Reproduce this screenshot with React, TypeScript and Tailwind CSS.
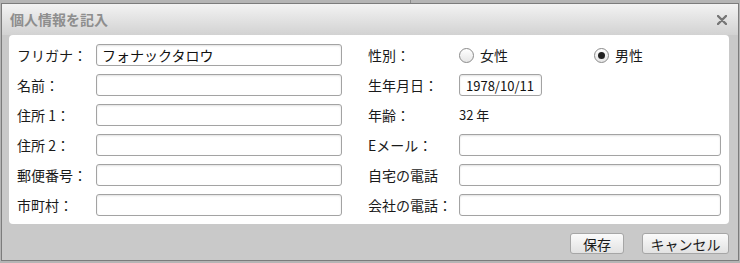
import React from 'react';

const font = { fontFamily: '"Noto Sans CJK JP", "Noto Sans", sans-serif' };

function TextBox({ value = '', className = '' }: { value?: string; className?: string }) {
    return (
        <div
            className={`h-[22px] rounded-[3px] border border-[#a3a3a3] bg-white shadow-[inset_0_1px_2px_rgba(0,0,0,0.12)] px-[5px] flex items-center text-[#111] leading-none ${className}`}
        >
            {value}
        </div>
    );
}

function Radio({ checked, label }: { checked?: boolean; label: string }) {
    return (
        <div className="flex items-center gap-[6px]">
            <span className="w-[15px] h-[15px] rounded-full border border-[#8a8a8a] bg-gradient-to-b from-white to-[#e6e6e6] flex items-center justify-center">
                {checked && <span className="w-[7px] h-[7px] rounded-full bg-[#222]" />}
            </span>
            <span>{label}</span>
        </div>
    );
}

export default function App() {
    const left = ['フリガナ：', '名前：', '住所 1：', '住所 2：', '郵便番号：', '市町村：'];

    return (
        <div className="relative w-[740px] h-[263px] bg-[#b5b5b5] pt-[3px] pl-[1px] pr-[1px]" style={font}>
            {/* page behind the dialog */}
            <div className="absolute left-[410px] top-0 w-[1px] h-[3px] bg-[#8c8c8c]" />

            <div className="h-[258px] border border-[#7c7c7c] bg-[#c9c9c9] flex flex-col">
                {/* title bar */}
                <div className="h-[31px] shrink-0 bg-gradient-to-b from-[#f3f3f3] to-[#d2d2d2] flex items-center justify-between pl-[8px] pr-[11px]">
                    <span className="text-[14px] font-bold text-[#8e8e8e]">個人情報を記入</span>
                    <svg width="10" height="10" viewBox="0 0 10 10">
                        <path d="M1 1 L9 9 M9 1 L1 9" stroke="#767676" strokeWidth="2.4" strokeLinecap="round" />
                    </svg>
                </div>

                {/* form panel */}
                <div className="ml-[7px] mr-[9px] bg-white rounded-[4px] pt-[9px] pb-[8px] pl-[8px] pr-[8px] flex text-[14px] text-[#1a1a1a]">
                    <div className="w-[325px] flex flex-col gap-[8px]">
                        {left.map((l, i) => (
                            <div key={l} className="flex items-center h-[22px]">
                                <span className="w-[79px]">{l}</span>
                                <TextBox className="w-[246px] text-[14px]" value={i === 0 ? 'フォナックタロウ' : ''} />
                            </div>
                        ))}
                    </div>
                    <div className="ml-[26px] flex-1 flex flex-col gap-[8px]">
                        <div className="flex items-center h-[22px]">
                            <span className="w-[91px]">性別：</span>
                            <div className="w-[135px]">
                                <Radio label="女性" />
                            </div>
                            <Radio checked label="男性" />
                        </div>
                        <div className="flex items-center h-[22px]">
                            <span className="w-[91px]">生年月日：</span>
                            <TextBox className="w-[83px] text-[13px] px-[6px]" value="1978/10/11" />
                        </div>
                        <div className="flex items-center h-[22px]">
                            <span className="w-[91px]">年齢：</span>
                            <span className="text-[13px]">32 年</span>
                        </div>
                        <div className="flex items-center h-[22px]">
                            <span className="w-[91px]">Eメール：</span>
                            <TextBox className="flex-1" />
                        </div>
                        <div className="flex items-center h-[22px]">
                            <span className="w-[91px]">自宅の電話</span>
                            <TextBox className="flex-1" />
                        </div>
                        <div className="flex items-center h-[22px]">
                            <span className="w-[91px]">会社の電話：</span>
                            <TextBox className="flex-1" />
                        </div>
                    </div>
                </div>

                {/* buttons */}
                <div className="flex justify-end gap-[18px] mr-[9px] mt-[9px]">
                    <button className="w-[54px] h-[21px] rounded-[3px] border border-[#a6a6a6] bg-gradient-to-b from-[#fbfbfb] to-[#e2e2e2] text-[14px] text-[#1a1a1a] leading-none">
                        保存
                    </button>
                    <button className="w-[87px] h-[21px] rounded-[3px] border border-[#a6a6a6] bg-gradient-to-b from-[#fbfbfb] to-[#e2e2e2] text-[14px] text-[#1a1a1a] leading-none">
                        キャンセル
                    </button>
                </div>
            </div>
        </div>
    );
}
